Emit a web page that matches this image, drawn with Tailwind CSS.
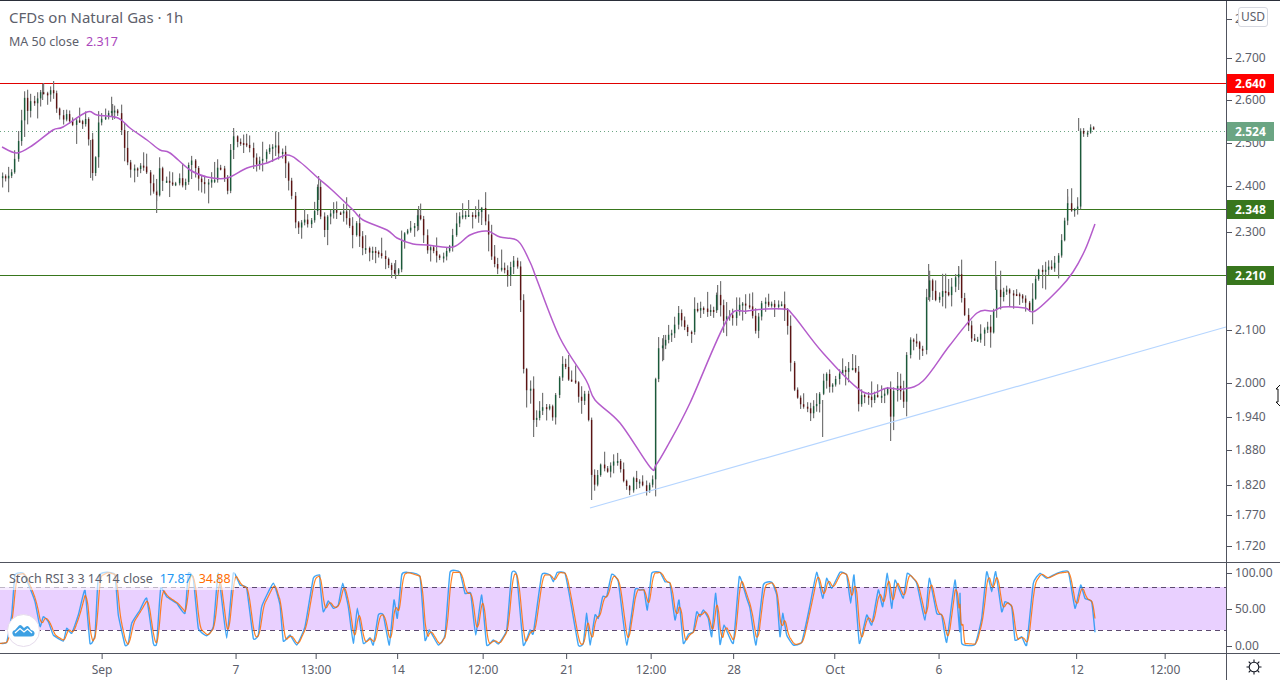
<!DOCTYPE html>
<html lang="en">
  <head>
    <meta charset="UTF-8" />
    <title>CFDs on Natural Gas</title>
    <script src="https://cdn.jsdelivr.net/npm/@tailwindcss/browser@4"></script>
  </head>
  <body class="bg-white overflow-hidden">
    <div class="w-[1280px] h-[680px] flex flex-col bg-white text-[12px] leading-none text-[#5d606b] font-['Noto_Sans',sans-serif]">
      <div class="h-px bg-[#2a2e39]"></div>

      <!-- Price pane -->
      <div class="h-[561px] flex">
        <div class="w-[1226px] relative">
          <svg id="price" class="absolute inset-0" width="1226" height="561" viewBox="0 1 1226 561"></svg>
          <div class="absolute left-[9px] top-[7px] text-[15px] leading-[18px] whitespace-nowrap">CFDs on Natural Gas · 1h</div>
          <div class="absolute left-[9px] top-[33px] flex gap-[7px] text-[12.5px] leading-[16px] whitespace-nowrap">
            <span>MA 50 close</span><span class="text-[#ab47bc]">2.317</span>
          </div>
        </div>
        <div id="priceAxis" class="w-[54px] border-l border-[#50535e] relative">
          <div class="absolute left-[11px] top-[6px] w-[30px] h-[20px] bg-white border border-[#d6d8e0] rounded-[3px] flex items-center justify-center z-10">USD</div>
          <svg class="absolute left-[48px] top-[382px]" width="6" height="26" viewBox="0 0 6 26">
            <path d="M6 1 L1 6 L3 6 L3 19 L1 19 L6 24" fill="#fff" stroke="#111" stroke-width="1"></path>
          </svg>
        </div>
      </div>
      <div class="h-px bg-[#50535e]"></div>

      <!-- Stoch RSI pane -->
      <div class="h-[90px] flex">
        <div class="w-[1226px] relative">
          <svg id="rsi" class="absolute inset-0" width="1226" height="90" viewBox="0 563 1226 90"></svg>
          <div class="absolute left-0 top-[5px] w-[235px] h-[22px] bg-white/60 pl-[9px] flex items-center gap-[7px] text-[12.5px] whitespace-nowrap">
            <span>Stoch RSI 3 3 14 14 close</span><span class="text-[#2196f3]">17.87</span><span class="text-[#ff6d00]">34.88</span>
          </div>
          <div class="absolute left-[7px] top-[51px] w-[33px] h-[33px] rounded-full bg-white border border-[#e6dcec] flex items-center justify-center">
            <svg width="23" height="13" viewBox="0 0 23 13">
              <path d="M1 11 Q-1 7 3 6 L7 1.5 Q8.2 .5 9.5 1.5 L12 4 L14 2.5 Q15.5 1.5 17 3 L19 6 Q23 7 22.5 10 Q22 12.500 19 12.500 L3 12.500 Q1.800 12.500 1 11 Z" fill="#3da0e3"></path>
              <path d="M3 9 L8 4.500 L12 8 L15.500 5 L20 9" fill="none" stroke="#fff" stroke-width="1.300"></path>
            </svg>
          </div>
        </div>
        <div id="rsiAxis" class="w-[54px] border-l border-[#50535e] relative"></div>
      </div>
      <div class="h-px bg-[#50535e]"></div>

      <!-- Time axis -->
      <div class="flex-1 flex">
        <div id="timeAxis" class="w-[1226px] relative"></div>
        <div class="w-[54px] border-l border-[#50535e] flex items-center justify-center">
          <svg width="18" height="18" viewBox="0 0 18 18" fill="none" stroke="#131722" stroke-width="1.100">
            <circle cx="9" cy="9" r="4.800"></circle>
            <path d="M9 1.500 V4 M9 14 V16.500 M1.500 9 H4 M14 9 H16.500 M3.700 3.700 L5.500 5.500 M12.500 12.500 L14.300 14.300 M14.300 3.700 L12.500 5.500 M5.500 12.500 L3.700 14.300"></path>
          </svg>
        </div>
      </div>
    </div>

    <script>
      const NS = "http://www.w3.org/2000/svg";

      function el(parent, name, attrs) {
        const node = document.createElementNS(NS, name);
        for (const k in attrs) node.setAttribute(k, attrs[k]);
        parent.appendChild(node);
        return node;
      }

      // small seeded random so the candles stay the same every run
      let seed = 1234;
      function rnd() {
        seed = (seed * 16807) % 2147483647;
        return seed / 2147483647;
      }

      function interp(pts, x) {
        for (let i = 0; i < pts.length - 2; i += 2) {
          if (x <= pts[i + 2]) {
            const t = (x - pts[i]) / (pts[i + 2] - pts[i] || 1);
            return pts[i + 1] + (pts[i + 3] - pts[i + 1]) * t;
          }
        }
        return pts[pts.length - 1];
      }

      // Catmull-Rom through the points, so the lines don't look angular
      function smooth(pts, div) {
        let s = "M" + pts[0] + " " + pts[1];
        for (let i = 0; i < pts.length - 2; i += 2) {
          const x0 = i ? pts[i - 2] : pts[i];
          const y0 = i ? pts[i - 1] : pts[i + 1];
          const x1 = pts[i], y1 = pts[i + 1], x2 = pts[i + 2], y2 = pts[i + 3];
          const x3 = i + 4 < pts.length ? pts[i + 4] : x2;
          const y3 = i + 4 < pts.length ? pts[i + 5] : y2;
          s += " C" + (x1 + (x2 - x0) / div).toFixed(1) + " " + (y1 + (y2 - y0) / div).toFixed(1) + " " +
            (x2 - (x3 - x1) / div).toFixed(1) + " " + (y2 - (y3 - y1) / div).toFixed(1) + " " + x2.toFixed(1) + " " + y2.toFixed(1);
        }
        return s;
      }

      // Close price path, in page pixels
      const closes = [
        0,178, 5,180, 8,177, 12,170, 15,158, 18,140, 21,120, 24,100, 27,110, 30,100, 35,102, 40,93, 45,93, 50,92, 53,93,
        57,110, 62,118, 65,115, 70,123, 82,122, 86,118, 88,133, 91,178, 95,157, 97,123, 103,117, 108,112, 113,107, 118,115,
        122,137, 126,160, 131,173, 137,168, 145,167, 148,180, 153,190, 157,195, 160,163, 163,183, 167,180, 173,183, 180,177,
        183,192, 188,167, 192,160, 197,178, 200,185, 208,182, 215,180, 218,163, 222,168, 227,193, 230,150, 233,137, 238,143,
        248,145, 253,160, 258,165, 265,152, 275,145, 278,153, 284,155, 288,182, 292,197, 293,220, 297,230, 302,220, 308,222,
        313,218, 318,177, 322,243, 325,213, 328,217, 335,210, 343,212, 349,223, 352,235, 357,220, 360,243, 363,250, 373,252,
        382,255, 388,263, 395,275, 397,277, 399,243, 403,237, 408,230, 415,228, 418,210, 422,227, 425,250, 430,245, 437,257,
        443,255, 450,243, 454,228, 458,215, 463,217, 470,217, 477,215, 481,209, 484,217, 487,230, 490,253, 495,268, 500,268,
        507,275, 512,263, 516,262, 519,287, 520,303, 522,347, 524,387, 530,390, 533,423, 538,413, 543,408, 550,407, 552,417,
        557,387, 563,358, 567,377, 575,385, 580,403, 585,390, 588,423, 591,477, 595,490, 599,460, 605,473, 612,462, 618,462,
        623,480, 628,492, 633,478, 640,483, 647,492, 652,477, 653,430, 655,380, 658,347, 662,347, 667,337, 673,333, 678,310,
        683,327, 690,337, 693,310, 700,308, 708,310, 713,310, 717,290, 722,320, 728,313, 733,320, 740,300, 750,310, 755,330,
        762,303, 772,305, 782,305, 787,323, 790,360, 793,387, 798,403, 805,405, 810,413, 815,403, 818,402, 825,373, 830,392,
        838,373, 850,367, 855,373, 858,402, 863,393, 868,398, 880,397, 887,390, 890,420, 893,390, 898,382, 903,405, 905,367,
        908,338, 915,340, 920,350, 924,353, 926,283, 930,282, 935,298, 942,293, 950,293, 953,282, 958,273, 960,293, 965,317,
        970,338, 975,340, 982,333, 988,328, 992,333, 995,280, 998,300, 1003,290, 1010,293, 1020,297, 1027,307, 1030,317,
        1033,287, 1037,270, 1043,270, 1055,265, 1058,253, 1060,247, 1063,227, 1067,203, 1072,213, 1077,208, 1078,127,
        1082,133, 1087,132, 1092,125, 1095,131,
      ];

      const ma = [
        2,147, 17,153, 33,145, 53,130, 63,127, 87,112, 97,115, 118,118, 130,128, 147,140, 160,150, 170,153, 190,170, 207,177,
        227,178, 247,168, 267,163, 287,155, 300,162, 318,178, 332,190, 353,210, 363,220, 387,230, 397,238, 413,244, 427,245,
        453,247, 470,235, 487,231, 500,237, 518,241, 530,262, 537,280, 560,338, 586,380, 595,400, 620,423, 650,467, 656,465,
        668,445, 690,403, 727,320, 747,311, 783,309, 793,315, 823,353, 863,392, 887,388, 903,389, 923,381, 950,345, 977,313, 993,311,
        1003,307, 1025,308, 1035,311, 1060,288, 1073,272, 1085,250, 1095,224,
      ];

      // long wicks seen on the reference: x, top, bottom
      const spikes = [
        [42,84,100], [90,140,178], [112,104,120], [156,190,213], [233,128,145], [318,176,200], [395,260,279], [418,206,230],
        [481,207,225], [533,410,437], [591,470,500], [663,335,360], [717,285,310], [822,400,437], [890,400,441], [928,264,300],
        [958,266,290], [995,261,290], [1067,189,205], [1078,118,131],
      ];

      // Drawing order: levels, candles, MA, trend line
      const price = document.getElementById("price");
      el(price, "line", { x1: 0, x2: 1226, y1: 131.5, y2: 131.5, stroke: "#6ba583", "stroke-dasharray": "1 3" });
      [[83.5, "#e00000"], [209.5, "#38761d"], [275.5, "#38761d"]].forEach(([y, c]) => {
        el(price, "line", { x1: 0, x2: 1226, y1: y, y2: y, stroke: c, "stroke-width": 1 });
      });

      spikes.forEach(([x, a, b]) => {
        el(price, "rect", { x: x, y: a, width: 1.2, height: b - a, fill: "#767676" });
      });

      const step = 3.22;
      let prev = closes[1];
      for (let x = 1.5; x <= 1095; x += step) {
        // the last few bars after the jump are very quiet
        const quiet = x > 1078;
        const jitter = (rnd() - 0.5) * (quiet ? 2 : 5);
        const close = interp(closes, x) + jitter;
        const reach = quiet ? 3 : 20;
        const hi = Math.min(prev, close) - 1 - rnd() * rnd() * reach;
        const lo = Math.max(prev, close) + 1 + rnd() * rnd() * reach;
        const rx = Math.round(x);
        el(price, "rect", { x: rx, y: hi, width: 1.2, height: lo - hi, fill: "#767676" });
        const top = Math.min(prev, close);
        el(price, "rect", {
          x: rx - 0.1,
          y: top,
          width: 1.4,
          height: Math.max(Math.abs(close - prev), 2),
          fill: close < prev ? "#1b5a3a" : "#5c1414",
        });
        prev = close;
      }

      el(price, "path", { d: smooth(ma, 6), fill: "none", stroke: "#b45ccb", "stroke-width": 1.5, "stroke-linejoin": "round" });
      el(price, "line", { x1: 590, y1: 508, x2: 1226, y2: 327, stroke: "#b5d5ff", "stroke-width": 1.2 });

      // Stoch RSI traces, written down per crop of the reference (3x scale)
      const rsiParts = [
        [0, 555, [0,265, 20,262, 35,180, 45,60, 70,55, 90,100, 105,140, 120,215, 130,185, 145,200, 160,240, 190,258, 200,220, 215,235, 235,180, 255,105, 270,265, 285,240, 295,65, 320,52, 345,60, 355,180, 375,270, 385,265, 395,205, 420,165, 440,130, 460,265, 470,265, 482,100, 500,125, 530,145, 555,175, 565,55, 580,70, 595,220, 620,242, 640,215, 655,55, 680,250, 700,55, 720,90, 740,100, 760,250, 775,240, 785,155, 820,85, 840,150, 850,258, 870,240, 890,270, 915,215, 940,70, 959,60]],
        [320, 565, [0,50, 10,140, 25,108, 40,130, 55,120, 68,55, 85,125, 100,235, 112,130, 130,235, 150,218, 160,240, 175,150, 190,150, 208,240, 222,105, 232,160, 245,30, 260,22, 300,35, 315,225, 328,195, 355,240, 375,210, 390,22, 420,22, 435,85, 452,85, 467,210, 485,90, 500,240, 520,225, 535,237, 560,195, 575,25, 590,30, 610,240, 630,195, 640,205, 665,30, 690,30, 700,50, 712,22, 735,25, 750,100, 775,240, 790,235, 800,145, 810,240, 825,150, 835,160, 848,95, 860,95, 875,28, 895,50, 920,240, 945,75, 959,75]],
        [640, 565, [0,75, 12,75, 22,135, 35,25, 60,22, 75,50, 90,55, 105,165, 117,105, 130,235, 145,208, 160,200, 170,140, 180,155, 190,135, 205,160, 215,215, 227,85, 240,238, 252,180, 280,235, 298,35, 320,100, 330,130, 348,240, 370,60, 395,52, 410,90, 420,215, 428,145, 440,210, 460,240, 485,232, 510,120, 530,22, 548,100, 560,40, 575,70, 600,22, 620,30, 632,115, 642,30, 658,235, 680,150, 695,180, 715,75, 728,125, 742,25, 755,130, 765,45, 790,100, 802,25, 830,55, 855,165, 868,40, 890,145, 905,150, 920,232, 945,45, 959,200]],
        [960, 555, [0,115, 5,265, 45,268, 65,190, 80,50, 95,110, 107,50, 125,170, 135,140, 155,155, 165,255, 185,245, 200,270, 220,85, 240,55, 260,70, 290,55, 325,50, 345,160, 362,90, 375,130, 395,140, 405,232]],
      ];
      const k = [];
      rsiParts.forEach(([ox, oy, pts]) => {
        for (let i = 0; i < pts.length; i += 2) k.push(ox + pts[i] / 3, oy + pts[i + 1] / 3);
      });

      // orange line is a short moving average of the blue one
      const d = [];
      for (let x = 0; x <= 1095; x += 1) {
        const y = (interp(k, x) + interp(k, x - 1.5) + interp(k, x - 3)) / 3;
        d.push(x, y);
      }

      const rsi = document.getElementById("rsi");
      el(rsi, "rect", { x: 0, y: 587, width: 1226, height: 43, fill: "#e9d0ff" });
      [587.5, 630.5].forEach((y) => {
        el(rsi, "line", { x1: 0, x2: 1226, y1: y, y2: y, stroke: "#5d4a70", "stroke-dasharray": "5 4" });
      });
      // low tension here: the trace is pinned at 0 and 100 and must not overshoot
      el(rsi, "path", { d: smooth(k, 16), fill: "none", stroke: "#2196f3", "stroke-width": 1.4, "stroke-linejoin": "round", opacity: 0.85 });
      el(rsi, "path", { d: smooth(d, 6), fill: "none", stroke: "#ff6d00", "stroke-width": 1.2, "stroke-linejoin": "round", opacity: 0.85 });

      // Axes
      function tick(host, top, text) {
        const row = document.createElement("div");
        row.className = "absolute left-0 h-4 flex items-center gap-[3px]";
        row.style.top = top + "px";
        row.innerHTML = '<i class="block w-[5px] h-px bg-[#50535e]"></i><span>' + text + "</span>";
        host.appendChild(row);
      }
      const priceAxis = document.getElementById("priceAxis");
      [[19, "2.800"], [58, "2.700"], [100, "2.600"], [143, "2.500"], [186, "2.400"], [232, "2.300"], [330, "2.100"], [383, "2.000"], [417, "1.940"], [450, "1.880"], [485, "1.820"], [515, "1.770"], [546, "1.720"]].forEach(
        ([y, t]) => tick(priceAxis, y - 9, t)
      );

      [[83.5, "2.640", "bg-[#ff0000]"], [131.5, "2.524", "bg-[#6ba583]"], [209.5, "2.348", "bg-[#38761d]"], [275.5, "2.210", "bg-[#38761d]"]].forEach(([y, t, bg]) => {
        const tag = document.createElement("div");
        tag.className = "absolute left-0 w-[47px] h-[19px] flex items-center pl-[8px] text-white font-bold " + bg;
        tag.style.top = y - 10.5 + "px";
        tag.textContent = t;
        priceAxis.appendChild(tag);
      });

      const rsiAxis = document.getElementById("rsiAxis");
      [[573, "100.00"], [609, "50.00"], [646, "0.00"]].forEach(([y, t]) => tick(rsiAxis, y - 563 - 8, t));

      const timeAxis = document.getElementById("timeAxis");
      [[102, "Sep"], [236, "7"], [316, "13:00"], [398, "14"], [483, "12:00"], [567, "21"], [651, "12:00"], [734, "28"], [835, "Oct"], [939, "6"], [1077, "12"], [1165, "12:00"]].forEach(([x, t]) => {
        const cell = document.createElement("div");
        cell.className = "absolute top-0 -translate-x-1/2 flex flex-col items-center gap-[5px]";
        cell.style.left = x + "px";
        cell.innerHTML = '<i class="block w-px h-[5px] bg-[#50535e]"></i><span>' + t + "</span>";
        timeAxis.appendChild(cell);
      });
    </script>
  </body>
</html>
